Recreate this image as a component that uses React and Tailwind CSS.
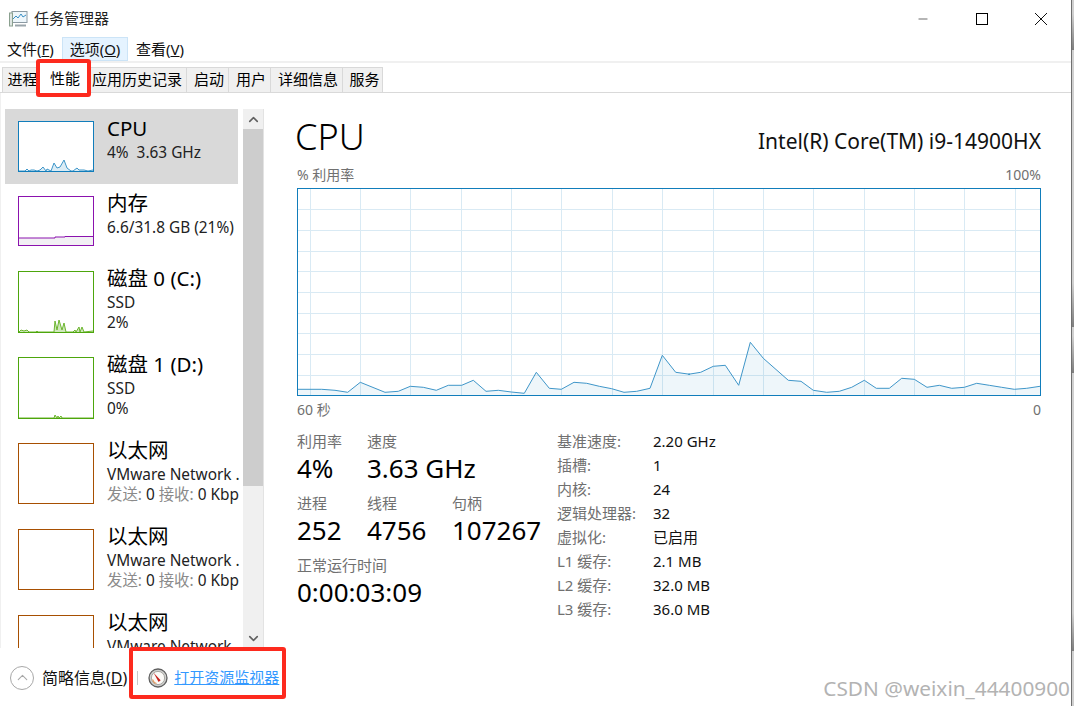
import { ChevronUp, ChevronDown, Minus } from 'lucide-react'

const CJK = '"Noto Sans", "Noto Sans CJK SC", sans-serif'

// traced from the graph, page coordinates = x/3 + offset, y/3 + 330
const cpuLeft = [[22,178],[95,178],[135,181],[173,187],[211,157],[285,187],[325,184],[361,169],[400,172],[439,181],[475,166],[515,166],[550,151],[588,184],[625,181],[664,186],[703,190],[739,127],[778,175],[814,178],[852,157],[890,160],[928,169],[965,176],[1002,187],[1040,184],[1080,175],[1117,76],[1157,127],[1200,133]]
const cpuRight = [[25,133],[62,127],[100,109],[136,106],[176,166],[211,37],[250,85],[325,151],[363,154],[400,181],[440,187],[478,184],[515,172],[553,151],[589,175],[628,175],[665,145],[703,148],[741,172],[778,166],[815,175],[853,172],[890,160],[928,166],[965,172],[1003,178],[1040,175],[1080,169]]

const GRAPH_X = 297
const GRAPH_Y = 188
const GRAPH_W = 744
const GRAPH_H = 207

const cpuPoints = [
  ...cpuLeft.map(([x, y]) => [x / 3 + 290 - GRAPH_X, y / 3 + 330 - GRAPH_Y]),
  ...cpuRight.map(([x, y]) => [x / 3 + 680 - GRAPH_X, y / 3 + 330 - GRAPH_Y]),
]
const cpuLine = cpuPoints.map((p) => p.map((n) => n.toFixed(1)).join(',')).join(' ')
const cpuFill = `0,${GRAPH_H} ${cpuLine} ${GRAPH_W},${GRAPH_H}`

const vLines = [310, 360, 410, 461, 511, 561, 612, 662, 713, 763, 813, 864, 914, 964, 1015]
const hLines = [209, 230, 251, 271, 292, 313, 333, 354, 375]

const thumbCpu = [[0,49],[6,49],[8,47],[10,49],[12,48],[15,48],[18,49],[21,48],[24,45],[27,49],[28,47],[32,49],[35,41],[38,46],[41,45],[45,38],[48,46],[52,49],[54,49],[58,46],[60,48],[65,48],[69,49],[74,48]]
const thumbMem = [[0,41],[36,41],[36,40],[46,40],[46,39.5],[74,39.5]]
const thumbDisk0 = [[0,60],[2,58],[5,59],[8,58],[10,60],[17,60],[18,59],[19,60],[35,60],[36,49],[38,58],[40,48],[43,58],[45,51],[47,60],[54,60],[56,58],[57,60],[60,55],[61,60],[63,55],[65,60],[74,59]]
const thumbDisk1 = [[0,60],[35,60],[36,57],[38,60],[39,58],[40,60],[42,58],[43,60],[74,60]]

function Thumb({ className, points, stroke, fill, w = 75, h }) {
  const inner = points.map((p) => p.join(',')).join(' ')
  const area = `0,${h} ${inner} ${w},${h}`
  return (
    <div className={`box-border shrink-0 border bg-white ${className}`} style={{ width: w + 1, height: h + 1 }}>
      {points.length > 0 && (
        <svg width={w - 1} height={h - 1} viewBox={`0 0 ${w - 1} ${h - 1}`} className="block">
          <polygon points={area} fill={fill} />
          <polyline points={inner} fill="none" stroke={stroke} strokeWidth="1" />
        </svg>
      )}
    </div>
  )
}

function SideItem({ selected, title, lines, thumb, tall }) {
  return (
    <div className={`flex shrink-0 gap-[13px] pl-[13px] pt-3 ${tall ? 'h-[86px]' : 'h-[75px]'} ${selected ? 'w-[233px] bg-[#d9d9d9]' : ''}`}>
      {thumb}
      <div className="-mt-[6px] min-w-0 flex-1 whitespace-pre">
        <div className="h-[28px] text-[20.5px] leading-[26px] text-black">{title}</div>
        {lines.map((l, i) => (
          <div key={i} className="h-5 text-[15.4px] leading-5 text-[#222]">{l}</div>
        ))}
      </div>
    </div>
  )
}

function NetLine() {
  return (
    <>
      <span className="text-[#8a8a8a]">发送:</span> 0 <span className="text-[#8a8a8a]">接收:</span> 0 Kbp
    </>
  )
}

function Stat({ label, value, className }) {
  return (
    <div className={className}>
      <div className="h-5 text-[15px] leading-5 text-[#707070]">{label}</div>
      <div className="h-[34px] text-[26px] leading-[34px] text-black">{value}</div>
    </div>
  )
}

function Spec({ label, value }) {
  return (
    <div className="flex h-6 items-center text-[15px]">
      <div className="w-24 text-[#707070]">{label}</div>
      <div className="text-[#111]">{value}</div>
    </div>
  )
}

function Tab({ children, className }) {
  return (
    <div className={`flex h-[25px] items-center justify-center border-t border-r border-[#d9d9d9] bg-[#f0f0f0] pb-[2px] text-[15px] ${className}`}>
      {children}
    </div>
  )
}

function AppIcon() {
  return (
    <svg width="19" height="18" viewBox="0 0 19 18" className="shrink-0">
      <rect x="3" y="1.5" width="15" height="11" fill="#eef6fb" stroke="#8c9aa3" />
      <polyline points="4,9 7,6 9,8 12,4 14,7 17,5" fill="none" stroke="#3a8fc4" strokeWidth="1" />
      <rect x="0.5" y="3" width="3" height="13" fill="#dfe6e3" stroke="#8aa08f" />
      <path d="M6 15.5h11" stroke="#9aa5ab" strokeWidth="2" />
    </svg>
  )
}

function GaugeIcon() {
  return (
    <svg width="20" height="20" viewBox="0 0 20 20" className="shrink-0">
      <circle cx="10" cy="10" r="9" fill="#cfcfcd" stroke="#5f5f5f" strokeWidth="1.3" />
      <circle cx="10" cy="10" r="6.6" fill="#fbfaf7" stroke="#9a9a96" strokeWidth="0.8" />
      <path d="M4.5 11.5a5.8 5.8 0 0 0 4 4" fill="none" stroke="#e39a62" strokeWidth="1.2" />
      <polygon points="5.6,4.8 12.6,12.2 10.6,14" fill="#c8201a" />
    </svg>
  )
}

function StripBlock({ className }) {
  return <div className={`absolute inset-x-0 bg-gradient-to-b from-[#d0d0d0] to-[#7d7d7d] ${className}`} />
}

export default function App() {
  return (
    <div className="relative flex h-[706px] w-[1074px] flex-col overflow-hidden bg-white text-black" style={{ fontFamily: CJK }}>
      {/* title bar */}
      <div className="flex h-[37px] shrink-0 items-center">
        <div className="flex items-center gap-[6px] pl-[9px] text-[15px] text-[#222]">
          <AppIcon />
          <span>任务管理器</span>
        </div>
        <div className="ml-auto flex items-center pr-[4px]">
          <div className="flex w-[59px] justify-center">
            <Minus size={14} strokeWidth={1} />
          </div>
          <div className="flex w-[59px] justify-center">
            <div className="h-3 w-3 border border-black" />
          </div>
          <div className="flex w-[59px] justify-center">
            <svg width="14" height="14" viewBox="0 0 14 14"><path d="M1 1l12 12M13 1L1 13" stroke="#111" strokeWidth="1" /></svg>
          </div>
        </div>
      </div>

      {/* menu */}
      <div className="flex h-[24px] shrink-0 items-center pl-[7px] text-[15px] text-[#111]">
        <span className="w-[55px]">文件(<u>F</u>)</span>
        <span className="flex h-[24px] w-[66px] items-center justify-center border border-[#cce4f7] bg-[#e5f3ff]">选项(<u>O</u>)</span>
        <span className="ml-[8px]">查看(<u>V</u>)</span>
      </div>

      {/* tabs */}
      <div className="flex h-[32px] shrink-0 items-end border-t-2 border-t-[#f0f0f0] border-b border-b-[#d9d9d9] pl-[2px]">
        <Tab className="w-[38px] border-l pl-[3px]">进程</Tab>
        <div className="relative -mb-px flex h-[30px] w-[50px] items-center justify-center bg-white text-[15px]">性能</div>
        <Tab className="w-[97px] justify-start pl-[2px]">应用历史记录</Tab>
        <Tab className="w-[42px] pl-[3px]">启动</Tab>
        <Tab className="w-[42px] pl-[3px]">用户</Tab>
        <Tab className="w-[72px] pl-[3px]">详细信息</Tab>
        <Tab className="w-[40px] pl-[4px]">服务</Tab>
      </div>

      {/* body */}
      <div className="flex min-h-0 flex-1">
        <div className="flex h-[555px] w-[264px] shrink-0 flex-col border-l border-l-[#f0f0f0] bg-white">
          <div className="flex min-h-0 flex-1 pt-4 pl-[4px]">
            <div className="flex w-[237px] shrink-0 flex-col overflow-hidden">
              <SideItem selected title="CPU" lines={['4%  3.63 GHz']} thumb={<Thumb className="border-[#117dbb]" points={thumbCpu} stroke="#3f96c9" fill="#dbecf5" h={50} />} />
              <SideItem title="内存" lines={['6.6/31.8 GB (21%)']} thumb={<Thumb className="border-[#8b12ae]" points={thumbMem} stroke="#8b12ae" fill="#f2f0f4" h={49} />} />
              <SideItem tall title="磁盘 0 (C:)" lines={['SSD', '2%']} thumb={<Thumb className="border-[#4da60c]" points={thumbDisk0} stroke="#6cb52f" fill="#cfe8bb" h={61} />} />
              <SideItem tall title="磁盘 1 (D:)" lines={['SSD', '0%']} thumb={<Thumb className="border-[#4da60c]" points={thumbDisk1} stroke="#6cb52f" fill="#cfe8bb" h={61} />} />
              <SideItem tall title="以太网" lines={['VMware Network .', <NetLine key="n" />]} thumb={<Thumb className="border-[#a74f01]" points={[]} h={60} />} />
              <SideItem tall title="以太网" lines={['VMware Network .', <NetLine key="n" />]} thumb={<Thumb className="border-[#a74f01]" points={[]} h={60} />} />
              <SideItem tall title="以太网" lines={['VMware Network .', <NetLine key="n" />]} thumb={<Thumb className="border-[#a74f01]" points={[]} h={60} />} />
            </div>
            <div className="ml-px box-content flex h-[539px] w-5 shrink-0 flex-col border-r border-r-[#e3e3e3] bg-[#f0f0f0]">
              <div className="flex h-5 items-center justify-center text-[#606060]">
                <ChevronUp size={15} strokeWidth={2.5} />
              </div>
              <div className="h-[357px] bg-[#cdcdcd]" />
              <div className="mt-auto flex h-5 items-center justify-center text-[#606060]">
                <ChevronDown size={15} strokeWidth={2.5} />
              </div>
            </div>
          </div>
        </div>

        {/* main */}
        <div className="min-w-0 flex-1 pt-[22px] pl-[33px] pr-[33px]">
          <div className="flex h-[44px] items-center justify-between">
            <div className="-ml-[2px] text-[36px] font-light leading-[44px]">CPU</div>
            <div className="mt-[10px] text-[21px] text-[#111]">Intel(R) Core(TM) i9-14900HX</div>
          </div>
          <div className="mt-[5px] flex h-5 items-center justify-between text-[14px] text-[#707070]">
            <span>% 利用率</span>
            <span>100%</span>
          </div>
          <div className="mt-[4px] box-border h-[208px] w-[744px] border border-[#117dbb]">
            <svg width="742" height="206" viewBox="1 1 742 206" className="block">
              {vLines.map((x) => (
                <line key={x} x1={x - GRAPH_X + 0.5} x2={x - GRAPH_X + 0.5} y1="0" y2={GRAPH_H} stroke="#d9eaf4" />
              ))}
              {hLines.map((y) => (
                <line key={y} x1="0" x2={GRAPH_W} y1={y - GRAPH_Y + 0.5} y2={y - GRAPH_Y + 0.5} stroke="#d9eaf4" />
              ))}
              <polygon points={cpuFill} fill="#117dbb" fillOpacity="0.07" />
              <polyline points={cpuLine} fill="none" stroke="#3f96c9" strokeWidth="1" />
            </svg>
          </div>
          <div className="mt-[3px] flex h-5 items-center justify-between text-[14px] text-[#707070]">
            <span>60 秒</span>
            <span>0</span>
          </div>

          <div className="mt-[12px] flex">
            <div className="w-[260px] shrink-0">
              <div className="flex">
                <Stat className="w-[70px]" label="利用率" value="4%" />
                <Stat label="速度" value="3.63 GHz" />
              </div>
              <div className="mt-2 flex">
                <Stat className="w-[70px]" label="进程" value="252" />
                <Stat className="w-[85px]" label="线程" value="4756" />
                <Stat label="句柄" value="107267" />
              </div>
              <Stat className="mt-2" label="正常运行时间" value="0:00:03:09" />
            </div>
            <div className="-mt-[2px]">
              <Spec label="基准速度:" value="2.20 GHz" />
              <Spec label="插槽:" value="1" />
              <Spec label="内核:" value="24" />
              <Spec label="逻辑处理器:" value="32" />
              <Spec label="虚拟化:" value="已启用" />
              <Spec label="L1 缓存:" value="2.1 MB" />
              <Spec label="L2 缓存:" value="32.0 MB" />
              <Spec label="L3 缓存:" value="36.0 MB" />
            </div>
          </div>
        </div>
      </div>

      {/* footer */}
      <div className="absolute inset-x-0 bottom-0 flex h-[58px] items-center bg-white pt-px pl-[10px]">
        <div className="flex h-6 w-6 items-center justify-center rounded-full border border-[#a8a8a8] text-[#a8a8a8]">
          <ChevronUp size={17} strokeWidth={1.5} />
        </div>
        <span className="ml-[8px] text-[16px] text-[#111]">简略信息(<u>D</u>)</span>
        <div className="ml-[10px] h-[14px] w-px bg-[#c8c8c8]" />
        <div className="ml-[10px]"><GaugeIcon /></div>
        <span className="ml-[6px] text-[15px] text-[#3399ff] underline">打开资源监视器</span>
      </div>

      {/* red annotation boxes */}
      <div className="absolute top-[59px] left-[36px] h-[38px] w-[55px] rounded-[3px] border-4 border-[#fd2a1e]" />
      <div className="absolute top-[647px] left-[129px] h-[52px] w-[157px] rounded-[3px] border-4 border-[#fd2a1e]" />

      {/* watermark */}
      <div className="absolute right-[4px] bottom-[6px] text-[20.8px] leading-6 text-[#b3b3b3]">CSDN @weixin_44400900</div>

      {/* edge of the window behind */}
      <div className="absolute inset-y-0 right-0 w-[3px] border-l border-l-[#707070] bg-[#d0d0d0]">
        <StripBlock className="top-[14px] h-[36px]" />
        <StripBlock className="top-[283px] h-[44px]" />
        <StripBlock className="top-[336px] h-[37px]" />
        <StripBlock className="top-[613px] h-[38px]" />
      </div>
    </div>
  )
}
